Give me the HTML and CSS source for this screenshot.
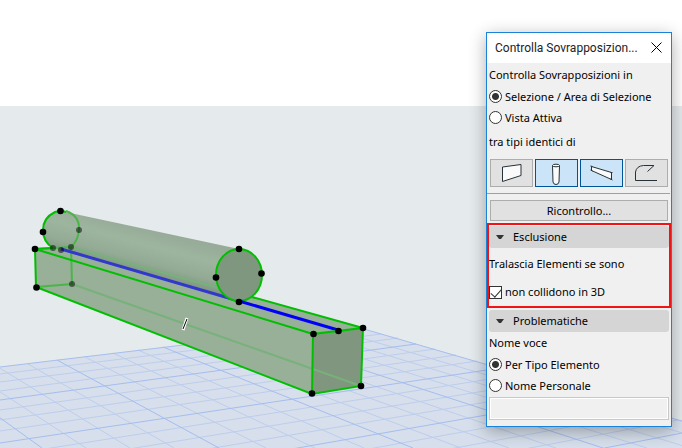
FILE: index.html
```html
<!DOCTYPE html>
<html lang="it">
<head>
<meta charset="utf-8">
<title>Controlla Sovrapposizioni</title>
<link rel="stylesheet" href="styles.css">
</head>
<body>
<main class="viewport">
  <svg class="scene" viewBox="0 106 682 342" preserveAspectRatio="xMinYMin slice" role="img" aria-label="Vista 3D">
    <defs>
      <linearGradient id="tube" gradientUnits="userSpaceOnUse" x1="154" y1="230" x2="142" y2="276">
        <stop offset="0" stop-color="#97ab98"/>
        <stop offset=".35" stop-color="#9db59f"/>
        <stop offset=".7" stop-color="#93aa94"/>
        <stop offset="1" stop-color="#7d947f"/>
      </linearGradient>
    </defs>
    <rect class="sky" y="106" width="682" height="342"/>
    <path class="ground" d="M0 367L350 325L682 421V448H0Z"/>
    <g class="grid">
      <path d="M0 374L365 329M0 382L381 334M0 391L398 338M0 410L435 349M0 420L456 355M0 431L477 361M0 456L522 374M0 470L546 381M0 484L570 388M0 516L622 403M0 532L650 412M0 548L678 420"/>
      <path d="M-95 378L-2 448M-32 371L86 448M-2 367L130 448M28 364L174 448M85 357L266 448M113 353L315 448M138 350L364 448M188 345L461 448M213 342L509 448M237 339L556 448M282 333L647 448M305 330L690 448M328 328L733 448"/>
    </g>
    <g class="grid major">
      <path d="M0 367L350 325M0 400L416 344M0 443L500 368M0 500L595 396M0 565L708 428"/>
      <path d="M-61 374L42 448M57 360L219 448M163 347L413 448M259 336L603 448M350 325L775 448"/>
    </g>
    <path class="beam" d="M35 249L71 247L363 328L361 386L312 394L36 287Z"/>
    <path class="beam-end" d="M313 334L363 328L361 386L312 394Z"/>
    <path class="tube" d="M61 211L75 214L239 249L262 275L239 301L53 248Q43 242 43 230Q43 212 61 211Z"/>
    <path class="hidden-edge" d="M71 247L254 298M72 284L361 386"/>
    <path class="back-edge" d="M71 247L72 284L36 287M35 249L71 247M66 211Q80 216 79 230Q78 241 71 247"/>
    <path class="edge" d="M66 212Q61 210 55 212Q43 218 43 230Q43 242 53 248"/>
    <path class="axis dim" d="M61 249L239 301"/>
    <ellipse class="tube-front" cx="239" cy="275" rx="23" ry="26"/>
    <path class="axis" d="M239 301L338 330"/>
    <path class="edge" d="M53 248L35 249L36 287L312 394L361 386L363 328L313 334L312 394M35 249L313 334M363 328L252 297"/>
    <g class="node dim"><circle cx="79" cy="230" r="3"/><circle cx="53" cy="248" r="3"/><circle cx="61" cy="250" r="3"/><circle cx="71" cy="247" r="3"/><circle cx="72" cy="284" r="3"/></g>
    <g class="node"><circle cx="60.500" cy="211" r="3.300"/><circle cx="43" cy="232" r="3.300"/><circle cx="35" cy="249" r="3.300"/><circle cx="36.500" cy="287.500" r="3.300"/><circle cx="239" cy="249" r="3.300"/><circle cx="216" cy="277.500" r="3.300"/><circle cx="261.500" cy="273.500" r="3.300"/><circle cx="239" cy="302" r="3.300"/><circle cx="313.500" cy="334" r="3.300"/><circle cx="338.500" cy="331" r="3.300"/><circle cx="363" cy="328" r="3.300"/><circle cx="361" cy="386" r="3.300"/><circle cx="312" cy="393.500" r="3.300"/></g>
    <path class="cursor-halo" d="M187 318L183 330"/>
    <path class="cursor" d="M187 319L183 329"/>
  </svg>
</main>

<section class="palette" aria-labelledby="palette-title">
  <header class="titlebar">
    <h1 id="palette-title">Controlla Sovrapposizion...</h1>
    <button class="close" type="button" aria-label="Chiudi"><svg width="11" height="11" viewBox="0 0 11 11"><path d="M.5 .5L10.500 10.500M10.500 .5L.5 10.500"/></svg></button>
  </header>

  <div class="group">
    <p class="caption">Controlla Sovrapposizioni in</p>
    <label class="option"><input type="radio" name="scope" checked>Selezione / Area di Selezione</label>
    <label class="option"><input type="radio" name="scope">Vista Attiva</label>
    <p class="caption spaced">tra tipi identici di</p>
  </div>

  <div class="types">
    <button type="button" aria-label="Muro"><svg viewBox="0 0 41 26"><path class="solid" d="M11.500 7L30 4.500V15.500L11.500 21.500Z"/></svg></button>
    <button type="button" class="on" aria-label="Pilastro" aria-pressed="true"><svg viewBox="0 0 41 26"><path class="solid" d="M16.500 5.500L17 22Q17.500 24.500 20 24.500T23 22L23.500 5.500"/><ellipse class="solid" cx="20" cy="5.500" rx="3.500" ry="1.300"/></svg></button>
    <button type="button" class="on" aria-label="Trave" aria-pressed="true"><svg viewBox="0 0 41 26"><path class="solid" d="M10.500 6.500L30.500 12.500V19.500L10.500 10.500Z"/><path d="M9.500 6L11.500 6.500M9.500 10L11.500 11M29.500 12.500H31.500M29.500 19L31.500 20"/></svg></button>
    <button type="button" aria-label="Falda"><svg viewBox="0 0 41 26"><path d="M31 20.500H9.500V12Q10.500 6 17.500 5.500H28L21.500 11.500"/></svg></button>
  </div>
  <hr>
  <button class="recheck" type="button">Ricontrollo...</button>

  <section class="exclusion">
    <h2><button class="fold" type="button" aria-expanded="true"><svg width="8" height="5" viewBox="0 0 8 5"><path d="M0 0H8L5 4H3Z"/></svg>Esclusione</button></h2>
    <p class="caption tall">Tralascia Elementi se sono</p>
    <label class="option check"><input type="checkbox" checked>non collidono in 3D</label>
  </section>

  <section class="issues">
    <h2><button class="fold" type="button" aria-expanded="true"><svg width="8" height="5" viewBox="0 0 8 5"><path d="M0 0H8L5 4H3Z"/></svg>Problematiche</button></h2>
    <p class="caption">Nome voce</p>
    <label class="option"><input type="radio" name="naming" checked>Per Tipo Elemento</label>
    <label class="option"><input type="radio" name="naming">Nome Personale</label>
    <input class="name" type="text" aria-label="Nome Personale">
  </section>
</section>
</body>
</html>
```
FILE: styles.css
```css
* { box-sizing: border-box; }

body {
  margin: 0;
  min-height: 100vh;
  display: flex;
  flex-direction: column;
  padding-top: 106px;
  overflow: hidden;
  background: #fff;
  color: #000;
  font: 11px/22px "Noto Sans", sans-serif;
}

button, input { font: inherit; color: inherit; margin: 0; }
h1, h2, p { margin: 0; font-size: inherit; font-weight: 400; }

/* 3D view */
.viewport { flex: 1; min-height: 0; display: flex; }
.scene { display: block; width: 100%; flex: 1; }
.sky { fill: #e5eaec; }
.ground { fill: #d6dfeb; }
.scene path, .scene ellipse { stroke-width: 2; }
.scene .grid path { fill: none; stroke: #bdcdec; stroke-width: 1; }
.scene .major path { stroke: #a5bdee; }
.beam { fill: #98af98; }
.beam-end { fill: #80967f; }
.tube { fill: url(#tube); }
.tube-front { fill: #7f967f; stroke: #00bf00; }
.edge, .back-edge, .hidden-edge { fill: none; stroke: #00bf00; }
.back-edge { stroke: #4bb54b; }
.hidden-edge { stroke: #76b27a; }
.scene .axis { stroke: #0000fa; stroke-width: 3; }
.scene .axis.dim { stroke: #3039cb; }
.node.dim { opacity: .5; }
.scene .cursor-halo { stroke: #fff; stroke-width: 3; }
.scene .cursor { stroke: #000; stroke-width: 1; }

/* Floating palette over the view */
.palette {
  position: absolute;
  top: 32px;
  right: 10px;
  width: 186px;
  padding-bottom: 6px;
  background: #f0f0f0;
  border: 1px solid #1a82d8;
  box-shadow: 0 4px 16px rgba(0, 0, 0, .32);
}

.titlebar {
  display: flex;
  align-items: center;
  justify-content: space-between;
  height: 30px;
  padding: 0 9px 0 8px;
  background: #fff;
}
.titlebar h1 { font: 12px/28px Roboto, sans-serif; color: #222; white-space: nowrap; }
.close { display: flex; padding: 0 0 2px; border: 0; background: none; }
.close svg { fill: none; stroke: #000; }

.group, .issues { padding: 0 2px; }
.group { padding-top: 1px; }
.caption.spaced { line-height: 28px; }
.caption.tall { line-height: 32px; }

.option {
  display: flex;
  align-items: center;
  gap: 3px;
  height: 21px;
  white-space: nowrap;
}
.option.check { height: 24px; }
.option input {
  appearance: none;
  flex: none;
  width: 13px;
  height: 13px;
  border: 1px solid #333;
  background: #fff;
}
.option [type="radio"] { border-radius: 50%; }
.option [type="radio"]:checked { background: radial-gradient(circle, #333 3px, #fff 4px); }
.option [type="checkbox"] { position: relative; }
.option [type="checkbox"]:checked::after {
  content: "";
  position: absolute;
  left: 1px;
  top: 2px;
  width: 9px;
  height: 5px;
  border: solid #333;
  border-width: 0 0 1px 1px;
  transform: rotate(-48deg);
}

.types {
  display: grid;
  grid-template-columns: repeat(4, 1fr);
  gap: 2px;
  padding: 3px 3px 6px;
}
.types button {
  display: flex;
  height: 28px;
  padding: 0;
  border: 1px solid #adadad;
  background: #e1e1e1;
}
.types .on { border-color: #005499; background: #cce4f7; }
.types svg { flex: 1; height: 26px; fill: none; stroke: #263238; }
.types .solid { fill: #fafafa; }

hr { margin: 0 1px 0 0; border: 0; border-top: 1px solid #a0a0a0; }
.recheck {
  display: block;
  width: calc(100% - 6px);
  height: 21px;
  margin: 6px 3px 2px;
  padding: 0;
  border: 1px solid #adadad;
  background: #e1e1e1;
  line-height: 19px;
}

.exclusion {
  margin-bottom: 2px;
  padding: 1px 0 2px;
  border: 2px solid #f01414;
}
.fold {
  display: flex;
  align-items: center;
  gap: 9px;
  width: 100%;
  height: 22px;
  padding: 0 7px;
  border: 0;
  border-radius: 3px;
  background: #d5d5d5;
}
.fold svg { fill: #333; }

.name {
  display: block;
  width: 100%;
  height: 23px;
  margin-top: 1px;
  padding: 0 4px;
  border: 1px solid #c8c8c8;
  background: #f0f0f0;
  box-shadow: inset 0 0 0 1px #fff;
}
```
